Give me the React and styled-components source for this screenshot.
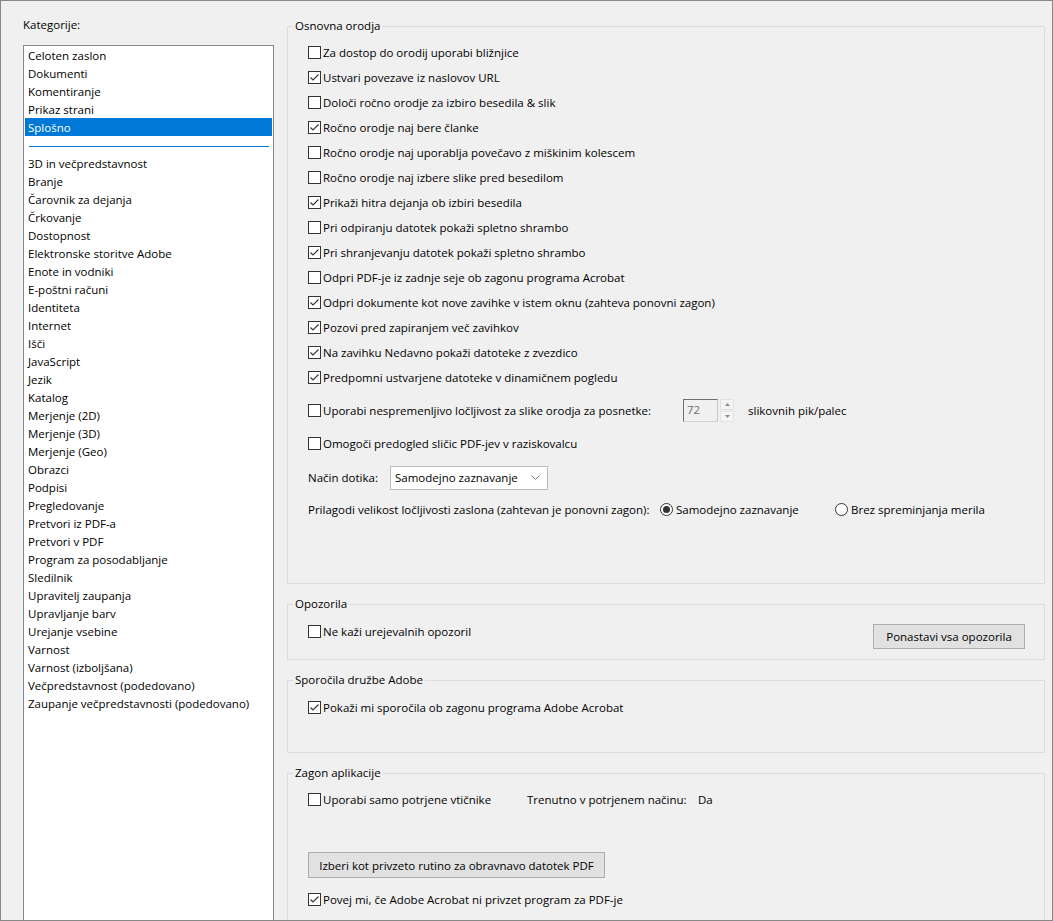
import React from "react";
import styled, { createGlobalStyle } from "styled-components";

const GlobalStyle = createGlobalStyle`
  html, body { margin: 0; padding: 0; background: #f0f0f0; }
  body {
    font-family: "Open Sans", "Liberation Sans", sans-serif;
    font-size: 11.5px;
    color: #000;
  }
  *, *::before, *::after { box-sizing: border-box; }
`;

const Window = styled.div`
  width: 1053px;
  height: 921px;
  border: 1px solid #888;
  background: #f0f0f0;
  display: grid;
  grid-template-columns: 285px 1fr;
  align-items: start;
  overflow: hidden;
`;

const LeftPane = styled.div`
  display: flex;
  flex-direction: column;
  padding: 15px 0 0 22px;
`;

const CatLabel = styled.div`
  height: 18px;
  line-height: 18px;
`;

const ListBox = styled.div`
  margin-top: 11px;
  width: 251px;
  height: 890px;
  background: #fff;
  border: 1px solid #828790;
  padding: 0 1px;
`;

const ListRow = styled.div`
  height: 18px;
  line-height: 17px;
  padding: 1px 0 0 3px;
  white-space: nowrap;
  background: ${(p) => (p.$selected ? "#0078d7" : "transparent")};
  color: ${(p) => (p.$selected ? "#fff" : "#000")};
`;

const Separator = styled.div`
  height: 18px;
  padding: 10px 3px 0 4px;
`;

const SepLine = styled.div`
  height: 1px;
  background: #0078d7;
`;

const RightPane = styled.div`
  display: flex;
  flex-direction: column;
  gap: 12px;
  padding: 17px 7px 0 1px;
`;

const Group = styled.fieldset`
  margin: 0;
  padding: 0;
  min-width: 0;
  border: 1px solid #dcdcdc;
  height: ${(p) => p.$h}px;
`;

const Legend = styled.legend`
  margin-left: 5px;
  padding: 0 2px;
  line-height: 16px;
  font-size: inherit;
`;

const GroupBody = styled.div`
  display: flex;
  flex-direction: ${(p) => (p.$row ? "row" : "column")};
  justify-content: ${(p) => (p.$row ? "space-between" : "flex-start")};
  align-items: flex-start;
  padding: ${(p) => p.$pt}px 19px 0 20px;
`;

const Row = styled.div`
  display: flex;
  align-items: center;
  height: 25px;
  margin-top: ${(p) => p.$mt || 0}px;
  white-space: nowrap;
`;

const Cell = styled.div`
  width: ${(p) => p.$w}px;
  flex: none;
  display: flex;
  align-items: center;
`;

const CheckLabel = styled.label`
  display: flex;
  align-items: center;
  white-space: nowrap;
`;

const Box = styled.span`
  width: 13px;
  height: 13px;
  flex: none;
  border: 1px solid #333;
  background: #fff;
  margin-right: 2px;
  display: flex;
`;

const RadioMark = styled.svg`
  width: 13px;
  height: 13px;
  flex: none;
  margin-right: 3px;
`;

const SpinInput = styled.div`
  width: 35px;
  height: 23px;
  border: 1px solid;
  border-color: #6f6f6f #c8c8c8 #d4d4d4 #6f6f6f;
  background: #f0f0f0;
  color: #6d6d6d;
  padding-left: 3px;
  line-height: 19px;
`;

const SpinButtons = styled.div`
  margin-left: 2px;
  width: 14px;
  height: 23px;
  display: flex;
  flex-direction: column;
  gap: 1px;
`;

const SpinBtn = styled.div`
  flex: 1;
  border: 1px solid #e2e2e2;
  background: #f5f5f5;
  display: flex;
  align-items: center;
  justify-content: center;
`;

const Unit = styled.span`
  margin-left: 14px;
`;

const SelectBox = styled.div`
  width: 158px;
  height: 24px;
  border: 1px solid #bcbcbc;
  background: #fff;
  display: flex;
  align-items: center;
  justify-content: space-between;
  padding: 0 7px 0 4px;
`;

const Button = styled.button`
  width: ${(p) => p.$w}px;
  height: ${(p) => p.$h}px;
  margin-top: ${(p) => p.$mt || 0}px;
  background: #e1e1e1;
  border: 1px solid #adadad;
  font: inherit;
  color: #000;
  padding: 0;
  flex: none;
`;

function Check({ checked, children }) {
  return (
    <CheckLabel>
      <Box>
        {checked && (
          <svg width="11" height="11" viewBox="0 0 11 11">
            <path d="M1.5 5.5 L4 8 L9.5 2.5" fill="none" stroke="#333" strokeWidth="1.1" />
          </svg>
        )}
      </Box>
      <span>{children}</span>
    </CheckLabel>
  );
}

function Radio({ checked, children }) {
  return (
    <CheckLabel>
      <RadioMark viewBox="0 0 13 13">
        <circle cx="6.5" cy="6.5" r="6" fill="#fff" stroke="#333" strokeWidth="1" />
        {checked && <circle cx="6.5" cy="6.5" r="3.5" fill="#333" />}
      </RadioMark>
      <span>{children}</span>
    </CheckLabel>
  );
}

const topCats = ["Celoten zaslon", "Dokumenti", "Komentiranje", "Prikaz strani", "Splošno"];
const cats = [
  "3D in večpredstavnost",
  "Branje",
  "Čarovnik za dejanja",
  "Črkovanje",
  "Dostopnost",
  "Elektronske storitve Adobe",
  "Enote in vodniki",
  "E-poštni računi",
  "Identiteta",
  "Internet",
  "Išči",
  "JavaScript",
  "Jezik",
  "Katalog",
  "Merjenje (2D)",
  "Merjenje (3D)",
  "Merjenje (Geo)",
  "Obrazci",
  "Podpisi",
  "Pregledovanje",
  "Pretvori iz PDF-a",
  "Pretvori v PDF",
  "Program za posodabljanje",
  "Sledilnik",
  "Upravitelj zaupanja",
  "Upravljanje barv",
  "Urejanje vsebine",
  "Varnost",
  "Varnost (izboljšana)",
  "Večpredstavnost (podedovano)",
  "Zaupanje večpredstavnosti (podedovano)",
];

const basics = [
  ["Za dostop do orodij uporabi bližnjice", false],
  ["Ustvari povezave iz naslovov URL", true],
  ["Določi ročno orodje za izbiro besedila & slik", false],
  ["Ročno orodje naj bere članke", true],
  ["Ročno orodje naj uporablja povečavo z miškinim kolescem", false],
  ["Ročno orodje naj izbere slike pred besedilom", false],
  ["Prikaži hitra dejanja ob izbiri besedila", true],
  ["Pri odpiranju datotek pokaži spletno shrambo", false],
  ["Pri shranjevanju datotek pokaži spletno shrambo", true],
  ["Odpri PDF-je iz zadnje seje ob zagonu programa Acrobat", false],
  ["Odpri dokumente kot nove zavihke v istem oknu (zahteva ponovni zagon)", true],
  ["Pozovi pred zapiranjem več zavihkov", true],
  ["Na zavihku Nedavno pokaži datoteke z zvezdico", true],
  ["Predpomni ustvarjene datoteke v dinamičnem pogledu", true],
];

export default function App() {
  return (
    <>
      <GlobalStyle />
      <Window>
        <LeftPane>
          <CatLabel>Kategorije:</CatLabel>
          <ListBox>
            {topCats.map((c) => (
              <ListRow key={c} $selected={c === "Splošno"}>
                {c}
              </ListRow>
            ))}
            <Separator>
              <SepLine />
            </Separator>
            {cats.map((c) => (
              <ListRow key={c}>{c}</ListRow>
            ))}
          </ListBox>
        </LeftPane>

        <RightPane>
          <Group $h={566}>
            <Legend>Osnovna orodja</Legend>
            <GroupBody $pt={6}>
              {basics.map(([t, c]) => (
                <Row key={t}>
                  <Check checked={c}>{t}</Check>
                </Row>
              ))}
              <Row $mt={8}>
                <Cell $w={375}>
                  <Check>Uporabi nespremenljivo ločljivost za slike orodja za posnetke:</Check>
                </Cell>
                <SpinInput>72</SpinInput>
                <SpinButtons>
                  <SpinBtn>
                    <svg width="5" height="3" viewBox="0 0 5 3">
                      <path d="M0 3 L2.5 0 L5 3 Z" fill="#8a8a8a" />
                    </svg>
                  </SpinBtn>
                  <SpinBtn>
                    <svg width="5" height="3" viewBox="0 0 5 3">
                      <path d="M0 0 L2.5 3 L5 0 Z" fill="#8a8a8a" />
                    </svg>
                  </SpinBtn>
                </SpinButtons>
                <Unit>slikovnih pik/palec</Unit>
              </Row>
              <Row $mt={8}>
                <Check>Omogoči predogled sličic PDF-jev v raziskovalcu</Check>
              </Row>
              <Row $mt={9}>
                <Cell $w={82}>Način dotika:</Cell>
                <SelectBox>
                  <span>Samodejno zaznavanje</span>
                  <svg width="9" height="5" viewBox="0 0 9 5">
                    <path d="M0.5 0.5 L4.5 4.5 L8.5 0.5" fill="none" stroke="#7a7a7a" strokeWidth="1" />
                  </svg>
                </SelectBox>
              </Row>
              <Row $mt={7}>
                <Cell $w={352}>Prilagodi velikost ločljivosti zaslona (zahtevan je ponovni zagon):</Cell>
                <Cell $w={175}>
                  <Radio checked>Samodejno zaznavanje</Radio>
                </Cell>
                <Radio>Brez spreminjanja merila</Radio>
              </Row>
            </GroupBody>
          </Group>

          <Group $h={64}>
            <Legend>Opozorila</Legend>
            <GroupBody $pt={7} $row>
              <Row>
                <Check>Ne kaži urejevalnih opozoril</Check>
              </Row>
              <Button $w={152} $h={25} $mt={5}>
                Ponastavi vsa opozorila
              </Button>
            </GroupBody>
          </Group>

          <Group $h={81}>
            <Legend>Sporočila družbe Adobe</Legend>
            <GroupBody $pt={7}>
              <Row>
                <Check checked>Pokaži mi sporočila ob zagonu programa Adobe Acrobat</Check>
              </Row>
            </GroupBody>
          </Group>

          <Group $h={220}>
            <Legend>Zagon aplikacije</Legend>
            <GroupBody $pt={6}>
              <Row>
                <Cell $w={219}>
                  <Check>Uporabi samo potrjene vtičnike</Check>
                </Cell>
                <Cell $w={171}>Trenutno v potrjenem načinu:</Cell>
                <span>Da</span>
              </Row>
              <Button $w={297} $h={26} $mt={40}>
                Izberi kot privzeto rutino za obravnavo datotek PDF
              </Button>
              <Row $mt={9}>
                <Check checked>Povej mi, če Adobe Acrobat ni privzet program za PDF-je</Check>
              </Row>
            </GroupBody>
          </Group>
        </RightPane>
      </Window>
    </>
  );
}
